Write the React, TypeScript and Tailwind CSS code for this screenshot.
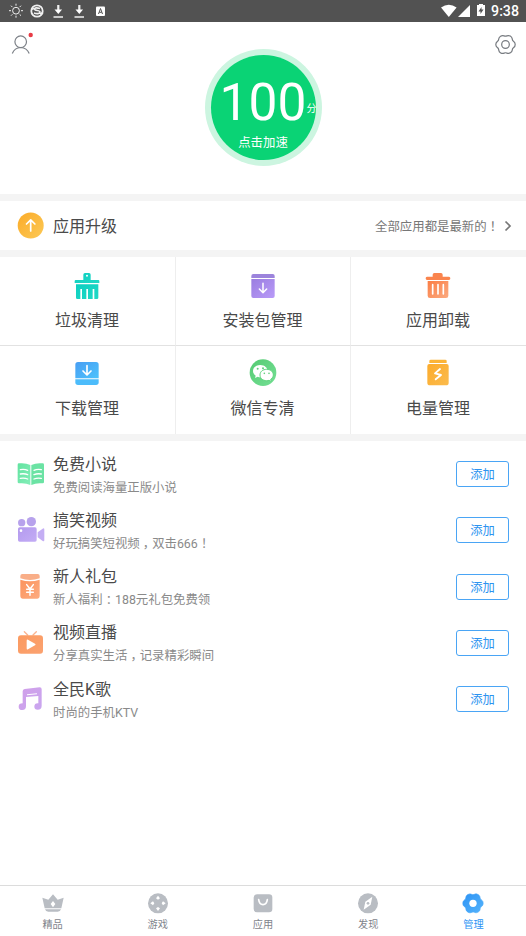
import React from 'react';

interface Feature {
  label: string;
  icon: React.ReactNode;
}

interface Recommendation {
  title: string;
  desc: React.ReactNode;
  icon: React.ReactNode;
}

interface Tab {
  label: string;
  icon: React.ReactNode;
  active?: boolean;
}

// punctuation sits in the middle of its full-width cell
function Mark({ children }: { children: string }) {
  return (
    <span className="inline-block w-[1em] text-center font-['Noto_Sans_CJK_SC'] leading-none [font-feature-settings:'halt']">
      {children}
    </span>
  );
}

function Gradient({ id, from, to }: { id: string; from: string; to: string }) {
  return (
    <defs>
      <linearGradient id={id} x1="0" y1="0" x2="1" y2="1">
        <stop offset="0" stopColor={from} />
        <stop offset="1" stopColor={to} />
      </linearGradient>
    </defs>
  );
}

// six-lobed nut, one lobe turned around (33, 33)
function gearPath() {
  const lobe = [[5, -26], [7, -31.1], [15, -26.5], [23, -21.9], [20, -17.3], [22.5, -13]];
  let d = 'M33 7';
  for (let i = 0; i < 6; i++) {
    const a = (i * Math.PI) / 3;
    const pts = lobe.map(([x, y]) => {
      const px = 33 + x * Math.cos(a) - y * Math.sin(a);
      const py = 33 + x * Math.sin(a) + y * Math.cos(a);
      return `${px.toFixed(2)} ${py.toFixed(2)}`;
    });
    d += `C${pts.join(' ')}`;
  }
  return d + 'z';
}

const gear = gearPath();

const broomIcon = (
  <svg width="28" height="28" viewBox="0 0 84 84">
    <Gradient id="broom" from="#0ccfc0" to="#22d9c6" />
    <g fill="url(#broom)">
      <path fillRule="evenodd" d="M31 24V8q0-5 5-5h12q5 0 5 5v16h23q3 0 3 4v5H5v-5q0-4 3-4zM42 8a3 3 0 1 0 0 6 3 3 0 1 0 0-6z" />
      <path d="M9 37h67v40q0 4-4 4h-8V51h-5v30H45V51h-5v30H27V51h-5v30h-9q-4 0-4-4z" />
    </g>
  </svg>
);

const packageIcon = (
  <svg width="28" height="28" viewBox="0 0 84 84">
    <Gradient id="package" from="#9a7de0" to="#b99bf8" />
    <path fill="#9c84dc" d="M7 18V12q0-6 6-6h58q6 0 6 6v6z" />
    <path fill="url(#package)" d="M7 21h70v51q0 6-6 6H13q-6 0-6-6z" />
    <path d="M42 34v27M31 51l11 11 11-11" fill="none" stroke="#fff" strokeWidth="4.500" strokeLinecap="round" strokeLinejoin="round" />
  </svg>
);

const trashIcon = (
  <svg width="28" height="28" viewBox="0 0 84 84">
    <Gradient id="trash" from="#fb7e45" to="#fbaa80" />
    <path fill="#fa844d" d="M26 14V8q0-5 5-5h20q5 0 5 5v6h19q4 0 4 5t-4 5H9q-4 0-4-5t4-5z" />
    <path fill="url(#trash)" d="M11 27h62v44q0 7-7 7H18q-7 0-7-7z" />
    <path d="M26 38v28M42 38v28M58 38v28" stroke="#fff" strokeWidth="5" strokeLinecap="round" />
  </svg>
);

const downloadIcon = (
  <svg width="28" height="28" viewBox="0 0 84 84">
    <Gradient id="download" from="#499ef3" to="#4cc3fc" />
    <path fill="url(#download)" d="M7 58V17q0-8 8-8h54q8 0 8 8v41z" />
    <path fill="#4cbcfb" d="M7 61h70v9q0 8-8 8H15q-8 0-8-8z" />
    <path d="M42 20v26M30 36l12 12 12-12" fill="none" stroke="#fff" strokeWidth="5" strokeLinecap="round" strokeLinejoin="round" />
  </svg>
);

const wechatIcon = (
  <svg width="28" height="28" viewBox="0 0 84 84">
    <Gradient id="wechat" from="#55ca72" to="#74e095" />
    <circle cx="42" cy="41" r="40" fill="url(#wechat)" />
    <path fill="#fff" d="M34 18c-13 0-22 8-22 18 0 6 3 10 8 14l-2 7 8-4q4 2 8 2c13 0 22-8 22-18S47 18 34 18z" />
    <path fill="#fff" stroke="#62d480" strokeWidth="3" d="M53 31c-12 0-20 7-20 17s8 17 20 17q4 0 7-1l7 4-2-7c5-4 8-8 8-13 0-10-9-17-20-17z" />
    <g fill="#5fcf7c">
      <circle cx="26" cy="29" r="3" />
      <circle cx="42" cy="28" r="3" />
      <circle cx="46" cy="43" r="2.5" />
      <circle cx="60" cy="43" r="2.5" />
    </g>
  </svg>
);

const batteryIcon = (
  <svg width="28" height="28" viewBox="0 0 84 84">
    <Gradient id="battery" from="#fcab2b" to="#fbbb4d" />
    <path fill="#fcb437" d="M16 12V6q0-4 4-4h44q4 0 4 4v6z" />
    <path fill="url(#battery)" d="M10 21q0-6 6-6h52q6 0 6 6v50q0 8-8 8H18q-8 0-8-8z" />
    <path d="M48 30L33 43l18 5-16 13" fill="none" stroke="#fff" strokeWidth="5.500" strokeLinecap="round" strokeLinejoin="round" />
  </svg>
);

const bookIcon = (
  <svg width="28" height="28" viewBox="0 0 84 84">
    <Gradient id="book" from="#62e3a0" to="#84eeb9" />
    <path fill="url(#book)" d="M2 14q0-4 4-4 20-2 34 5v60q-14-7-34-5-4 0-4-4z" />
    <path fill="#6be3a4" d="M43 15q14-7 34-5 4 0 4 4v52q0 4-4 4-20-2-34 5z" />
    <path d="M10 29q13-2 22 2M10 42q13-2 22 2M10 55q13-2 22 2M51 31q9-4 22-2M51 44q9-4 22-2M51 57q9-4 22-2" fill="none" stroke="#fff" strokeWidth="4" strokeLinecap="round" />
  </svg>
);

const cameraIcon = (
  <svg width="28" height="28" viewBox="0 0 84 84">
    <Gradient id="camera" from="#b39aee" to="#c3acf5" />
    <circle cx="14" cy="20" r="11" fill="#b7a2ec" />
    <circle cx="43" cy="17" r="14" fill="#b7a2ec" />
    <path fill="url(#camera)" d="M3 39q0-5 5-5h46q5 0 5 5v33q0 5-5 5H8q-5 0-5-5z" />
    <path fill="#c4aef4" d="M62 49l15-11q5-3 5 3v31q0 6-5 3L62 64z" />
    <circle cx="12" cy="44" r="4" fill="#fff" />
  </svg>
);

const giftIcon = (
  <svg width="28" height="28" viewBox="0 0 84 84">
    <Gradient id="gift" from="#fb935d" to="#fdac80" />
    <path fill="#f9ae88" d="M10 16V9q0-6 6-6h46q6 0 6 6v7q-29 10-58 0z" />
    <path fill="url(#gift)" d="M10 20q29 10 58 0v50q0 7-7 7H17q-7 0-7-7z" />
    <path d="M29 35l10 13 10-13M39 48v19M29 49h20M29 58h20" fill="none" stroke="#fff" strokeWidth="4.500" strokeLinecap="round" strokeLinejoin="round" />
  </svg>
);

const tvIcon = (
  <svg width="28" height="28" viewBox="0 0 84 84">
    <Gradient id="tv" from="#fb9a60" to="#fba270" />
    <path d="M22 8l10 10M58 8L48 18" stroke="#fbb48f" strokeWidth="4" strokeLinecap="round" />
    <rect x="3" y="19" width="75" height="55" rx="9" fill="url(#tv)" />
    <path fill="#fff" d="M29 35q0-5 4-3l21 12q4 3 0 5L33 61q-4 2-4-3z" />
  </svg>
);

const musicIcon = (
  <svg width="28" height="28" viewBox="0 0 84 84">
    <Gradient id="music" from="#d19fe9" to="#c9a6ef" />
    <path
      fill="url(#music)"
      fillRule="evenodd"
      transform="translate(0 5)"
      d="M17 14q0-6 6-7l45-5q6 0 6 6v49q0 12-12 12-10 0-10-9 0-11 12-10V28l-37 3v28q0 11-11 11Q5 70 5 60q0-10 12-10zM30 23l30-3v3l-30 3z"
    />
  </svg>
);

const features: Feature[] = [
  { label: '垃圾清理', icon: broomIcon },
  { label: '安装包管理', icon: packageIcon },
  { label: '应用卸载', icon: trashIcon },
  { label: '下载管理', icon: downloadIcon },
  { label: '微信专清', icon: wechatIcon },
  { label: '电量管理', icon: batteryIcon },
];

const recommendations: Recommendation[] = [
  { title: '免费小说', desc: '免费阅读海量正版小说', icon: bookIcon },
  { title: '搞笑视频', desc: <>好玩搞笑短视频<Mark>，</Mark>双击666<Mark>！</Mark></>, icon: cameraIcon },
  { title: '新人礼包', desc: <>新人福利<Mark>：</Mark>188元礼包免费领</>, icon: giftIcon },
  { title: '视频直播', desc: <>分享真实生活<Mark>，</Mark>记录精彩瞬间</>, icon: tvIcon },
  { title: '全民K歌', desc: '时尚的手机KTV', icon: musicIcon },
];

const tabs: Tab[] = [
  {
    label: '精品',
    icon: (
      <svg width="22" height="22" viewBox="0 0 66 66">
        <path fill="#b9bdc3" fillRule="evenodd" d="M1 14l18 6L33 4l14 16 18-6-7 32H8zM33 24l-7 9 7 10 7-10z" />
        <path fill="#b9bdc3" d="M9 49h48q-2 7-10 7H19q-8 0-10-7z" />
      </svg>
    ),
  },
  {
    label: '游戏',
    icon: (
      <svg width="22" height="22" viewBox="0 0 66 66">
        <circle cx="33" cy="31" r="30" fill="#b9bdc3" />
        <path fill="#fff" d="M33 8l6 8-6 4-6-4zM33 54l6-8-6-4-6 4zM10 31l8-6 4 6-4 6zM56 31l-8-6-4 6 4 6z" />
      </svg>
    ),
  },
  {
    label: '应用',
    icon: (
      <svg width="22" height="22" viewBox="0 0 66 66">
        <rect x="5" y="4" width="56" height="54" rx="10" fill="#b9bdc3" />
        <path d="M20 20q2 15 13 15t13-15" fill="none" stroke="#fff" strokeWidth="5" strokeLinecap="round" />
      </svg>
    ),
  },
  {
    label: '发现',
    icon: (
      <svg width="22" height="22" viewBox="0 0 66 66">
        <circle cx="33" cy="31" r="30" fill="#b9bdc3" />
        <path fill="#fff" d="M46 11l-5 24-21 15 5-24z" />
        <circle cx="33" cy="31" r="4" fill="#b9bdc3" />
      </svg>
    ),
  },
  {
    label: '管理',
    active: true,
    icon: (
      <svg width="22" height="22" viewBox="0 2 66 66">
        <Gradient id="manage" from="#2c93f4" to="#56b4fc" />
        <path fill="url(#manage)" stroke="url(#manage)" strokeWidth="2" d={gear} />
        <circle cx="33" cy="33" r="11" fill="#fff" />
      </svg>
    ),
  },
];

function StatusBar() {
  return (
    <div className="flex h-[22px] items-center justify-between bg-[#525252] pl-2 pr-[7px]">
      <svg width="100" height="22" viewBox="0 0 100 22" fill="none" stroke="#f0f0f0">
        <circle cx="8" cy="10.700" r="3.400" />
        <path d="M8 3.700v2M8 15.700v2M1 10.700h2M13 10.700h2M3 5.700l1.400 1.400M11.600 14.300l1.400 1.400M13 5.700l-1.400 1.400M4.400 14.300L3 15.700" />
        <circle cx="29" cy="11" r="5.700" strokeWidth="1.800" />
        <path d="M32 8.500q-5-1.500-5.500.5c0 2 5.500 1 5.500 3s-3.500 2-6 1M23 9.500l3-1M32 14l3-1.500" strokeWidth="1.600" />
        <path d="M45.500 17h9.500M66.500 17h9.500" strokeWidth="1.400" />
        <path d="M50.300 5v6M71.300 5v6" strokeWidth="2.200" />
        <path d="M46.500 9.500h7.600L50.300 14zM67.500 9.500h7.600L71.300 14z" fill="#fff" stroke="none" />
        <rect x="88" y="6.500" width="9" height="9.500" rx="1" fill="#fff" stroke="none" />
        <path d="M90.500 14l2-5.500 2 5.500M91.300 12.300h2.400" stroke="#525252" />
      </svg>
      <div className="flex items-center">
        <svg width="48" height="22" viewBox="0 0 48 22" fill="#fff">
          <path d="M0 7.500q7.800-5.500 15.600 0L7.800 17z" />
          <path d="M17 17L29 5v12z" />
          <path fillRule="evenodd" d="M36 5h2V4h4v1h2v11h-8zM40.500 7l-3 4.500h2V14l3-4.500h-2z" />
        </svg>
        <span className="ml-[2px] font-['Roboto'] text-[14.200px] leading-[22px] font-medium text-white">9:38</span>
      </div>
    </div>
  );
}

function ScoreHeader() {
  return (
    <header className="grid h-[172px] grid-cols-[40px_1fr_40px] items-start">
      <svg className="mt-[8px] ml-[8px]" width="30" height="30" viewBox="0 0 30 30" fill="none" stroke="#7c8087" strokeWidth="1.200">
        <circle cx="12.700" cy="11.700" r="5.800" />
        <path d="M4.300 23.500q2.200-5.800 8.400-6 6.200.2 8.500 6" />
        <circle cx="22.700" cy="5" r="2.200" fill="#e83b45" stroke="none" />
      </svg>
      <div className="mt-[27px] flex size-[117px] items-center justify-center justify-self-center rounded-full bg-[#ccf5e0]">
        <div className="flex size-[105px] flex-col items-center rounded-full bg-[#0ad375] text-white">
          <div className="relative mt-[22px] font-['Roboto'] text-[51.500px] leading-[52px]">
            100
            <span className="absolute right-[-10px] bottom-[13px] font-['Noto_Sans_CJK_SC'] text-[10px] leading-[16px]">分</span>
          </div>
          <div className="mt-[5px] text-[12.400px] leading-[18px]">点击加速</div>
        </div>
      </div>
      <svg className="mt-[12px] mr-[10px] justify-self-end" width="21" height="21" viewBox="0 0 66 66" fill="none" stroke="#777b80" strokeWidth="3.800">
        <path d={gear} />
        <circle cx="33" cy="33" r="12" />
      </svg>
    </header>
  );
}

function UpgradeRow() {
  return (
    <div className="flex h-[63px] items-center border-y-[7px] border-[#f4f4f4] pr-[14px] pl-[17px]">
      <svg width="28" height="28" viewBox="0 0 28 28">
        <Gradient id="upgrade" from="#fbab28" to="#fcc956" />
        <circle cx="13.700" cy="13.500" r="13" fill="url(#upgrade)" />
        <path d="M13.700 19V8.500M9.500 12l4.200-4.200 4.200 4.200" fill="none" stroke="#fff" strokeWidth="1.700" strokeLinecap="round" strokeLinejoin="round" />
      </svg>
      <span className="ml-2 flex-1 pt-[2px] text-[16px] leading-6 text-[#4a4a4a]">应用升级</span>
      <span className="pt-[3px] text-[12.400px] leading-5 text-[#777]">全部应用都是最新的<Mark>！</Mark></span>
      <svg className="ml-[5px]" width="8" height="12" viewBox="0 0 8 12" fill="none" stroke="#777" strokeWidth="1.700">
        <path d="M1.500 1.500L6 6l-4.500 4.500" />
      </svg>
    </div>
  );
}

export default function App() {
  return (
    <div className="flex h-[936px] w-[526px] flex-col overflow-hidden bg-white font-['Roboto','Noto_Sans_CJK_SC',sans-serif]">
      <StatusBar />
      <ScoreHeader />
      <UpgradeRow />

      <div className="grid h-[184px] grid-cols-[176px_175px_175px] grid-rows-[89px_88px] border-b-[7px] border-[#f4f4f4]">
        {features.map((feature, i) => (
          <div
            key={feature.label}
            className={`flex flex-col items-center border-r-[#eeeeee] border-b-[#e2e2e2] pr-px ${i < 3 ? 'border-b pt-[15px]' : 'pt-[13px]'} ${i % 3 < 2 ? 'border-r' : ''}`}
          >
            {feature.icon}
            <span className={`text-[16px] leading-6 text-[#4a4a4a] ${i < 3 ? 'mt-[9px]' : 'mt-[10px]'}`}>{feature.label}</span>
          </div>
        ))}
      </div>

      <div className="flex-1 pt-[5px]">
        {recommendations.map((item) => (
          <div key={item.title} className="flex h-[56.250px] items-center pr-[17px] pl-[17px]">
            {item.icon}
            <div className="ml-2 flex-1 pt-[3px]">
              <div className="text-[16px] leading-6 text-[#4a4a4a]">{item.title}</div>
              <div className="text-[12.400px] leading-[22px] text-[#8a8a8a]">{item.desc}</div>
            </div>
            <button className="h-[26px] w-[53px] rounded-[3px] border border-[#4aa5f5] pt-px text-[12.300px] leading-6 text-[#2c93f0]">
              添加
            </button>
          </div>
        ))}
      </div>

      <nav className="grid h-[51px] grid-cols-5 border-t border-[#dcdcdc]">
        {tabs.map((tab) => (
          <div key={tab.label} className="flex flex-col items-center pt-[7px]">
            {tab.icon}
            <span className={`mt-[2px] text-[10.200px] leading-4 ${tab.active ? 'text-[#2c93f4]' : 'text-[#7f848c]'}`}>{tab.label}</span>
          </div>
        ))}
      </nav>
    </div>
  );
}
